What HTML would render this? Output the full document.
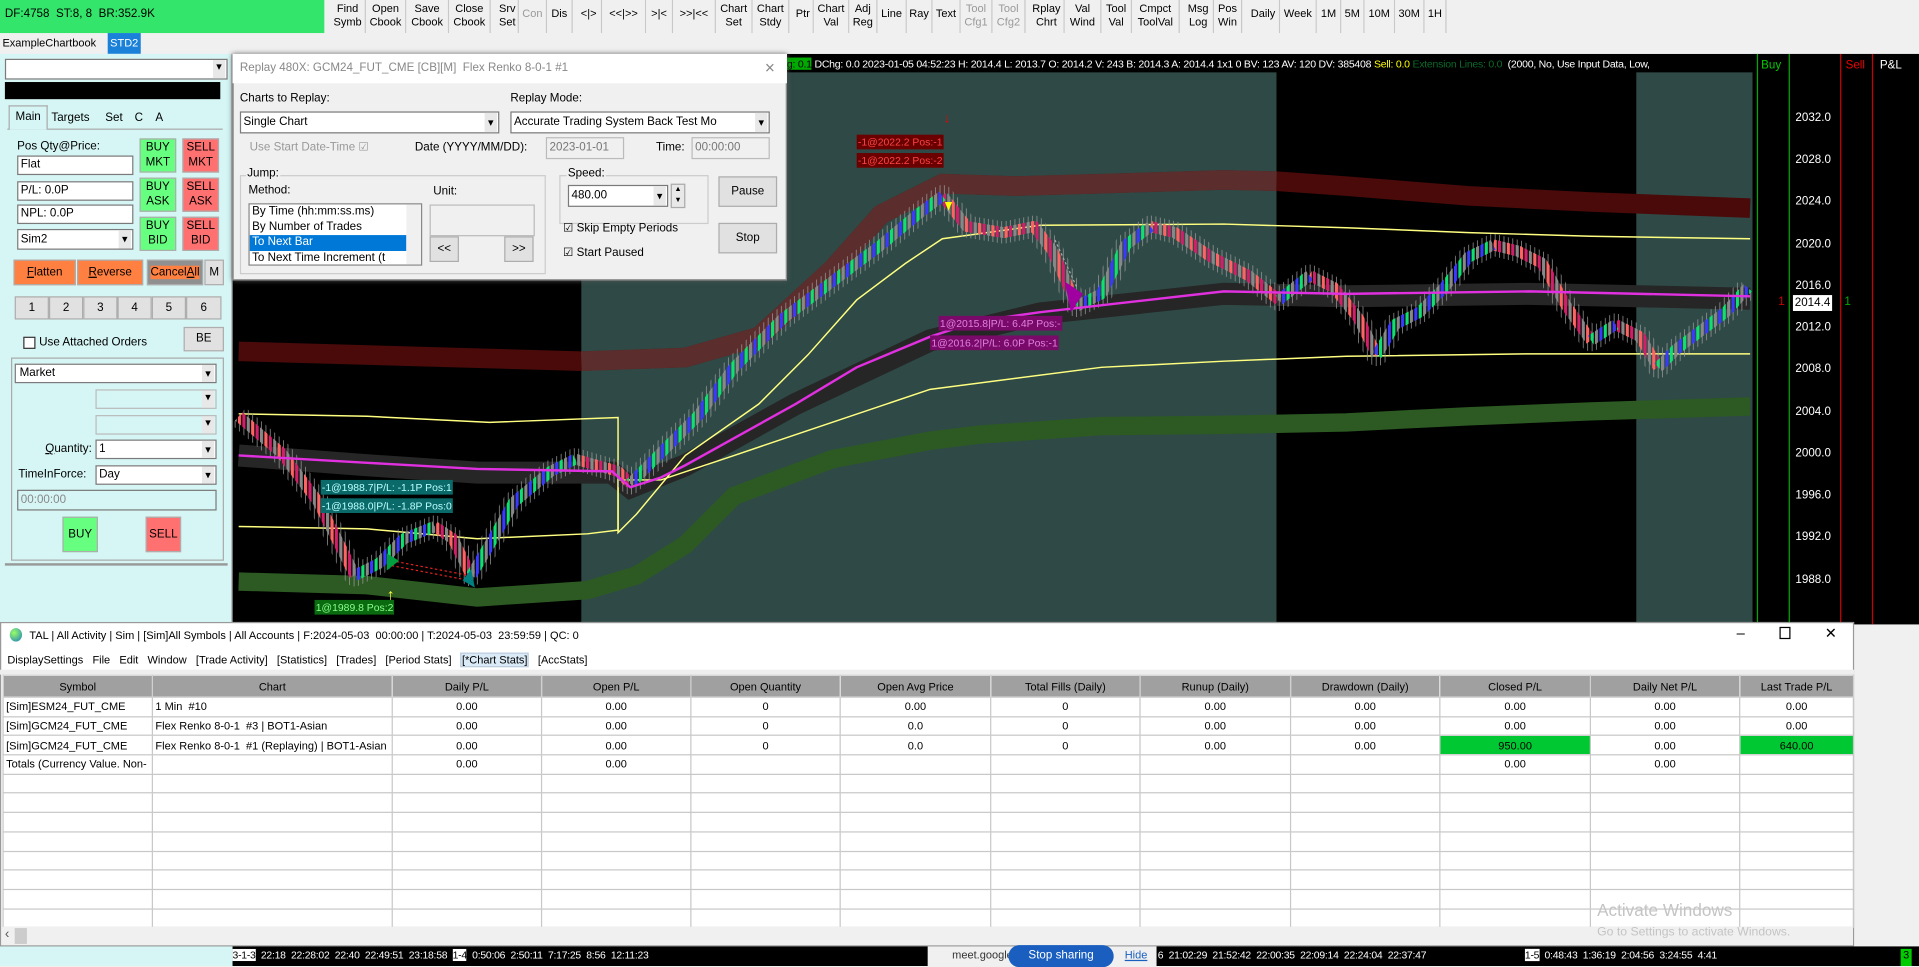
<!DOCTYPE html>
<html><head><meta charset="utf-8">
<style>
*{box-sizing:border-box;margin:0;padding:0}
html,body{width:1919px;height:966px;overflow:hidden;background:#f0f0f0}
#w{position:absolute;left:0;top:0;width:1568px;height:789px;transform:scale(1.22385,1.22433);transform-origin:0 0;font-family:"Liberation Sans Narrow","Liberation Sans",sans-serif;font-size:9.5px;color:#000}
.a{position:absolute}
.tb{position:absolute;top:0;height:27px;border-right:1px solid #c8c8c8;text-align:center;line-height:11px;padding-top:2px;font-size:9px;background:#f0f0f0;overflow:hidden;white-space:nowrap}
.tb.s{line-height:23px;padding-top:0}
.g{color:#999}
.btn{position:absolute;background:#e1e1e1;border:1px solid #adadad;text-align:center}
.inp{position:absolute;background:#fff;border:1px solid #7a7a7a;overflow:hidden;white-space:nowrap}
.dd:after{content:"▾";position:absolute;right:1px;top:0;font-size:9px;width:10px;height:100%;background:#e8e8e8;text-align:center}
table{border-collapse:collapse;table-layout:fixed}
td,th{border:1px solid #c8c8c8;height:15.7px;font-weight:normal;font-size:9px;white-space:nowrap;overflow:hidden;padding:0 2px;text-align:center}
th{background:#a0a0a0;height:18px;border-color:#d0d0d0}
td.l{text-align:left}
.lab{position:absolute;font-size:8.5px;padding:0 1px;line-height:12px;white-space:nowrap}
.px{position:absolute;left:1467px;color:#fff;font-size:9.5px}
</style></head><body><div id="w">

<div class="a" style="left:0;top:0;width:265px;height:28px;background:#33e66b;font-size:9.5px;line-height:24px;padding-left:4px">DF:4758&nbsp; ST:8, 8&nbsp; BR:352.9K</div>
<div class="tb" style="left:270px;width:29px">Find<br>Symb</div>
<div class="tb" style="left:299px;width:33px">Open<br>Cbook</div>
<div class="tb" style="left:332px;width:35px">Save<br>Cbook</div>
<div class="tb" style="left:367px;width:34px">Close<br>Cbook</div>
<div class="tb" style="left:406px;width:18px">Srv<br>Set</div>
<div class="tb s g" style="left:424px;width:23px">Con</div>
<div class="tb s" style="left:447px;width:21px">Dis</div>
<div class="tb s" style="left:471px;width:21px">&lt;|&gt;</div>
<div class="tb s" style="left:492px;width:36px">&lt;&lt;|&gt;&gt;</div>
<div class="tb s" style="left:528px;width:22px">&gt;|&lt;</div>
<div class="tb s" style="left:550px;width:35px">&gt;&gt;|&lt;&lt;</div>
<div class="tb" style="left:585px;width:30px">Chart<br>Set</div>
<div class="tb" style="left:615px;width:30px">Chart<br>Stdy</div>
<div class="tb s" style="left:648px;width:17px">Ptr</div>
<div class="tb" style="left:665px;width:29px">Chart<br>Val</div>
<div class="tb" style="left:694px;width:23px">Adj<br>Reg</div>
<div class="tb s" style="left:717px;width:24px">Line</div>
<div class="tb s" style="left:741px;width:21px">Ray</div>
<div class="tb s" style="left:762px;width:23px">Text</div>
<div class="tb g" style="left:785px;width:26px">Tool<br>Cfg1</div>
<div class="tb g" style="left:811px;width:27px">Tool<br>Cfg2</div>
<div class="tb" style="left:841px;width:29px">Rplay<br>Chrt</div>
<div class="tb" style="left:870px;width:30px">Val<br>Wind</div>
<div class="tb" style="left:900px;width:25px">Tool<br>Val</div>
<div class="tb" style="left:925px;width:39px">Cmpct<br>ToolVal</div>
<div class="tb" style="left:967px;width:25px">Msg<br>Log</div>
<div class="tb" style="left:992px;width:23px">Pos<br>Win</div>
<div class="tb s" style="left:1019px;width:27px">Daily</div>
<div class="tb s" style="left:1046px;width:30px">Week</div>
<div class="tb s" style="left:1076px;width:20px">1M</div>
<div class="tb s" style="left:1096px;width:19px">5M</div>
<div class="tb s" style="left:1115px;width:25px">10M</div>
<div class="tb s" style="left:1140px;width:24px">30M</div>
<div class="tb s" style="left:1164px;width:18px">1H</div>

<div class="a" style="left:0;top:27px;width:1568px;height:17px;background:#f0f0f0"></div>
<div class="a" style="left:2px;top:28px;height:15px;line-height:15px;font-size:9px">ExampleChartbook</div>
<div class="a" style="left:88px;top:27px;width:27px;height:17px;background:#1a80d8;color:#fff;line-height:17px;text-align:center;font-size:9px">STD2</div>

<svg class="a" style="left:190px;top:44px" width="1378" height="466" viewBox="190 44 1378 466">
<defs>
<pattern id="pu" patternUnits="userSpaceOnUse" width="10.8" height="20"><rect x="0" y="0" width="2.6" height="20" fill="#3a3aff"/><rect x="3.6" y="0" width="2.6" height="20" fill="#10e070"/><rect x="7.2" y="0" width="2.6" height="20" fill="#888"/></pattern>
<pattern id="pd" patternUnits="userSpaceOnUse" width="10.8" height="20"><rect x="0" y="0" width="2.6" height="20" fill="#ff6464"/><rect x="3.6" y="0" width="2.6" height="20" fill="#d0206a"/><rect x="7.2" y="0" width="2.6" height="20" fill="#888"/></pattern>
<pattern id="pw" patternUnits="userSpaceOnUse" width="3.6" height="20"><rect x="1" y="0" width="0.6" height="20" fill="#999"/></pattern>
</defs>
<rect x="190" y="44" width="1378" height="466" fill="#000"/>
<rect x="475" y="59" width="568" height="451" fill="#2f4a46"/>
<rect x="1337" y="59" width="95" height="451" fill="#2f4a46"/>
<polyline fill="none" stroke="#4a0a0a" stroke-width="16" points="195,287 475,295 560,292 620,275 680,220 720,175 770,150 830,152 900,150 1000,147 1043,148 1100,152 1200,160 1300,165 1430,170"/>
<polyline fill="none" stroke="#6a4a48" stroke-width="16" stroke-opacity=".55" points="475,295 560,292 620,275 680,220 720,175 770,150 830,152 900,150 1000,147 1043,148"/>
<polyline fill="none" stroke="#2c5a22" stroke-width="15" points="195,475 300,478 390,488 480,482 520,470 560,445 600,405 680,375 760,360 800,355 900,348 1000,347 1100,345 1200,340 1300,336 1430,332"/>
<polyline fill="none" stroke="#262626" stroke-width="18" points="195,372 300,380 390,386 500,386 515,398 560,380 650,330 760,278 850,256 1000,240 1100,242 1250,240 1430,244"/>
<polyline fill="none" stroke="#ffff80" stroke-width="1.2" points="195,338 300,340 400,345 505,341 505,435 520,420 560,372 620,330 660,290 700,245 740,215 770,195 850,184 1000,183 1100,186 1200,190 1300,193 1430,195"/>
<polyline fill="none" stroke="#ffff80" stroke-width="1.2" points="195,430 300,432 390,440 480,436 505,433 505,392 540,392 600,372 650,355 760,318 900,300 1000,295 1100,291 1250,289 1430,289"/>
<g fill="none" stroke-linejoin="round">
<polyline stroke="url(#pw)" stroke-width="18" points="195,340 230,370 260,410 290,470 310,460 330,440 355,430 370,440 385,470 400,445 420,410 450,385 470,375 505,385 515,395 540,370 570,340 600,300 640,260 680,230 720,200 750,175 770,160 790,185 820,190 845,185 860,205 880,250 900,240 920,200 940,185 960,190 990,210 1020,225 1045,245 1070,225 1090,235 1110,260 1125,290 1140,265 1160,255 1180,235 1200,210 1220,200 1240,205 1260,215 1280,250 1300,278 1320,265 1340,275 1355,300 1370,285 1390,270 1410,255 1428,235"/>
<g stroke="url(#pd)" stroke-width="9">
<polyline points="195,340 230,370 260,410 290,470"/>
<polyline points="355,430 370,440 385,470"/>
<polyline points="470,375 505,385 515,395"/>
<polyline points="770,160 790,185 820,190 845,185 860,205 880,250"/>
<polyline points="940,185 960,190 990,210 1020,225 1045,245"/>
<polyline points="1070,225 1090,235 1110,260 1125,290"/>
<polyline points="1220,200 1240,205 1260,215 1280,250 1300,278"/>
<polyline points="1320,265 1340,275 1355,300"/>
</g>
<g stroke="url(#pu)" stroke-width="9">
<polyline points="290,470 310,460 330,440 355,430"/>
<polyline points="385,470 400,445 420,410 450,385 470,375"/>
<polyline points="515,395 540,370 570,340 600,300 640,260 680,230 720,200 750,175 770,160"/>
<polyline points="880,250 900,240 920,200 940,185"/>
<polyline points="1045,245 1070,225"/>
<polyline points="1125,290 1140,265 1160,255 1180,235 1200,210 1220,200"/>
<polyline points="1300,278 1320,265"/>
<polyline points="1355,300 1370,285 1390,270 1410,255 1428,235"/>
</g></g>
<polyline fill="none" stroke="#e030e0" stroke-width="2" points="195,372 300,378 390,383 500,385 515,398 540,390 560,380 650,330 700,300 760,275 800,262 850,255 1000,238 1100,240 1250,238 1430,242"/>
<line x1="862" y1="196" x2="880" y2="235" stroke="#aaa" stroke-dasharray="2,2"/>
<line x1="320" y1="458" x2="383" y2="470" stroke="#e02020" stroke-dasharray="2,2"/>
<line x1="320" y1="462" x2="383" y2="474" stroke="#e02020" stroke-dasharray="2,2"/>
<polygon points="870,230 885,240 875,255" fill="#a000a0"/>
<polygon points="385,465 378,474 388,480" fill="#008080"/>
<polygon points="316,452 326,458 316,466" fill="#00a040"/>
<polygon points="772,165 778,165 775,172" fill="#ffff00"/>
<text x="771" y="100" fill="#e00" font-size="11">↓</text>
<text x="316" y="490" fill="#ffff40" font-size="13">↑</text>
<rect x="1432" y="44" width="136" height="466" fill="#000"/>
<line x1="1436" y1="44" x2="1436" y2="510" stroke="#0a0"/>
<line x1="1462" y1="44" x2="1462" y2="510" stroke="#0a0"/>
<line x1="1504" y1="44" x2="1504" y2="510" stroke="#c00"/>
<line x1="1530" y1="44" x2="1530" y2="510" stroke="#c00"/>
</svg>
<div class="a" style="left:643px;top:45px;width:789px;height:14px;background:#000;color:#fff;font-size:8.6px;line-height:14px;white-space:nowrap;overflow:hidden;letter-spacing:-0.2px"><span style="background:#0a0;color:#000">g: 0.1</span> DChg: 0.0 2023-01-05 04:52:23 H: 2014.4 L: 2013.7 O: 2014.2 V: 243 B: 2014.3 A: 2014.4 1x1 0 BV: 123 AV: 120 DV: 385408 <span style="color:#ff0">Sell: 0.0</span> <span style="color:#0a6a2a">Extension Lines: 0.0</span> &nbsp;(2000, No, Use Input Data, Low,</div>
<div class="a" style="left:1439px;top:48px;color:#0c0;font-size:9.5px">Buy</div>
<div class="a" style="left:1508px;top:48px;color:#e00;font-size:9.5px">Sell</div>
<div class="a" style="left:1536px;top:48px;color:#fff;font-size:9.5px">P&amp;L</div>
<div class="px" style="top:91px">2032.0</div><div class="px" style="top:125px">2028.0</div><div class="px" style="top:159px">2024.0</div><div class="px" style="top:194px">2020.0</div><div class="px" style="top:228px">2016.0</div><div class="px" style="top:262px">2012.0</div><div class="px" style="top:296px">2008.0</div><div class="px" style="top:331px">2004.0</div><div class="px" style="top:365px">2000.0</div><div class="px" style="top:399px">1996.0</div><div class="px" style="top:433px">1992.0</div><div class="px" style="top:468px">1988.0</div>
<div class="a" style="left:1465px;top:241px;width:32px;height:13px;background:#fff;color:#000;font-size:9.5px;line-height:13px;text-align:center">2014.4</div>
<div class="a" style="left:1453px;top:241px;color:#c00;font-size:9.5px">1</div>
<div class="a" style="left:1507px;top:241px;color:#0a0;font-size:9.5px">1</div>
<div class="lab" style="left:700px;top:110px;background:#6a0000;color:#f44">-1@2022.2 Pos:-1</div>
<div class="lab" style="left:700px;top:125px;background:#6a0000;color:#f44">-1@2022.2 Pos:-2</div>
<div class="lab" style="left:767px;top:258px;background:#7a0a6a;color:#e080e0">1@2015.8|P/L: 6.4P Pos:-</div>
<div class="lab" style="left:760px;top:274px;background:#7a0a6a;color:#e080e0">1@2016.2|P/L: 6.0P Pos:-1</div>
<div class="lab" style="left:262px;top:392px;background:#0a6a6a;color:#bff">-1@1988.7|P/L: -1.1P Pos:1</div>
<div class="lab" style="left:262px;top:407px;background:#0a6a6a;color:#bff">-1@1988.0|P/L: -1.8P Pos:0</div>
<div class="lab" style="left:257px;top:490px;background:#0a6a10;color:#8f8">1@1989.8 Pos:2</div>

<div class="a" style="left:0;top:44px;width:190px;height:466px;background:#d6f6f6;border-right:1px solid #aaa"></div>
<div class="inp dd" style="left:4px;top:48px;width:182px;height:17px"></div>
<div class="a" style="left:4px;top:67px;width:176px;height:14px;background:#000"></div>
<div class="a" style="left:6px;top:86px;width:176px;height:20px;border-bottom:1px solid #aaa"></div>
<div class="a" style="left:7px;top:86px;width:32px;height:20px;background:#d6f6f6;border:1px solid #aaa;border-bottom:none;line-height:18px;text-align:center">Main</div>
<div class="a" style="left:42px;top:89px;line-height:15px">Targets</div>
<div class="a" style="left:86px;top:89px;line-height:15px">Set</div>
<div class="a" style="left:110px;top:89px;line-height:15px">C</div>
<div class="a" style="left:127px;top:89px;line-height:15px">A</div>
<div class="a" style="left:14px;top:114px">Pos Qty@Price:</div>
<div class="inp" style="left:14px;top:127px;width:95px;height:16px;padding-left:2px;line-height:14px">Flat</div>
<div class="inp" style="left:14px;top:148px;width:95px;height:16px;padding-left:2px;line-height:14px">P/L: 0.0P</div>
<div class="inp" style="left:14px;top:167px;width:95px;height:16px;padding-left:2px;line-height:14px">NPL: 0.0P</div>
<div class="inp dd" style="left:14px;top:187px;width:95px;height:17px;padding-left:2px;line-height:15px">Sim2</div>
<div class="btn" style="left:114px;top:113px;width:30px;height:28px;background:#66ff80;line-height:12px;padding-top:1px">BUY<br>MKT</div>
<div class="btn" style="left:149px;top:113px;width:30px;height:28px;background:#ff7070;line-height:12px;padding-top:1px">SELL<br>MKT</div>
<div class="btn" style="left:114px;top:145px;width:30px;height:28px;background:#66ff80;line-height:12px;padding-top:1px">BUY<br>ASK</div>
<div class="btn" style="left:149px;top:145px;width:30px;height:28px;background:#ff7070;line-height:12px;padding-top:1px">SELL<br>ASK</div>
<div class="btn" style="left:114px;top:177px;width:30px;height:28px;background:#66ff80;line-height:12px;padding-top:1px">BUY<br>BID</div>
<div class="btn" style="left:149px;top:177px;width:30px;height:28px;background:#ff7070;line-height:12px;padding-top:1px">SELL<br>BID</div>
<div class="btn" style="left:11px;top:212px;width:51px;height:21px;background:#ff8040;line-height:19px"><u>F</u>latten</div>
<div class="btn" style="left:63px;top:212px;width:54px;height:21px;background:#ff8040;line-height:19px"><u>R</u>everse</div>
<div class="btn" style="left:120px;top:212px;width:46px;height:21px;background:#909090;line-height:19px;white-space:nowrap"><span style="background:#ff8040">Cancel<u>A</u>ll</span></div>
<div class="btn" style="left:167px;top:212px;width:16px;height:21px;line-height:19px">M</div>
<div class="btn" style="left:12px;top:242px;width:28px;height:19px;line-height:17px">1</div>
<div class="btn" style="left:40px;top:242px;width:28px;height:19px;line-height:17px">2</div>
<div class="btn" style="left:68px;top:242px;width:28px;height:19px;line-height:17px">3</div>
<div class="btn" style="left:96px;top:242px;width:28px;height:19px;line-height:17px">4</div>
<div class="btn" style="left:124px;top:242px;width:28px;height:19px;line-height:17px">5</div>
<div class="btn" style="left:152px;top:242px;width:29px;height:19px;line-height:17px">6</div>
<div class="a" style="left:19px;top:275px;width:10px;height:10px;background:#fff;border:1px solid #333"></div>
<div class="a" style="left:32px;top:274px">Use Attached Orders</div>
<div class="btn" style="left:150px;top:267px;width:33px;height:20px;line-height:18px">BE</div>
<div class="a" style="left:9px;top:292px;width:174px;height:166px;border:1px solid #aaa"></div>
<div class="inp dd" style="left:12px;top:297px;width:165px;height:16px;padding-left:3px;line-height:14px">Market</div>
<div class="inp dd" style="left:78px;top:318px;width:99px;height:16px;background:#d6f6f6;border-color:#bbb"></div>
<div class="inp dd" style="left:78px;top:339px;width:99px;height:16px;background:#d6f6f6;border-color:#bbb"></div>
<div class="a" style="left:37px;top:361px"><u>Q</u>uantity:</div>
<div class="inp dd" style="left:78px;top:359px;width:99px;height:16px;padding-left:2px;line-height:14px">1</div>
<div class="a" style="left:15px;top:382px">TimeInForce:</div>
<div class="inp dd" style="left:78px;top:380px;width:99px;height:16px;padding-left:2px;line-height:14px">Day</div>
<div class="inp" style="left:14px;top:400px;width:163px;height:17px;background:#d6f6f6;color:#888;padding-left:2px;line-height:15px">00:00:00</div>
<div class="btn" style="left:51px;top:422px;width:29px;height:29px;background:#66ff80;line-height:27px">BUY</div>
<div class="btn" style="left:119px;top:422px;width:29px;height:29px;background:#ff7070;line-height:27px">SELL</div>
<div class="a" style="left:4px;top:460px;width:182px;height:2px;background:#999"></div>

<div class="a" style="left:190px;top:44px;width:453px;height:185px;background:#f0f0f0;border:1px solid #888;box-shadow:0 0 4px #555"></div>
<div class="a" style="left:190px;top:44px;width:453px;height:24px;background:#fff"></div>
<div class="a" style="left:196px;top:50px;color:#888;font-size:9.5px">Replay 480X: GCM24_FUT_CME [CB][M]&nbsp; Flex Renko 8-0-1 #1</div>
<div class="a" style="left:625px;top:47px;color:#888;font-size:14px">×</div>
<div class="a" style="left:196px;top:75px">Charts to Replay:</div>
<div class="inp dd" style="left:196px;top:91px;width:212px;height:18px;padding-left:2px;line-height:16px">Single Chart</div>
<div class="a" style="left:417px;top:75px">Replay Mode:</div>
<div class="inp dd" style="left:417px;top:91px;width:212px;height:18px;padding-left:2px;line-height:16px">Accurate Trading System Back Test Mo</div>
<div class="a" style="left:204px;top:115px;color:#999">Use Start Date-Time ☑</div>
<div class="a" style="left:339px;top:115px">Date (YYYY/MM/DD):</div>
<div class="inp" style="left:446px;top:112px;width:64px;height:18px;background:#f0f0f0;border-color:#bbb;color:#777;padding-left:2px;line-height:16px">2023-01-01</div>
<div class="a" style="left:536px;top:115px">Time:</div>
<div class="inp" style="left:565px;top:112px;width:64px;height:18px;background:#f0f0f0;border-color:#bbb;color:#777;padding-left:2px;line-height:16px">00:00:00</div>
<div class="a" style="left:196px;top:143px;width:250px;height:81px;border:1px solid #ccc"></div>
<div class="a" style="left:201px;top:136px;background:#f0f0f0;padding:0 1px">Jump:</div>
<div class="a" style="left:203px;top:150px">Method:</div>
<div class="a" style="left:354px;top:151px">Unit:</div>
<div class="a" style="left:203px;top:166px;width:142px;height:51px;background:#fff;border:1px solid #888;overflow:hidden;line-height:12.5px;padding-left:2px;white-space:nowrap">By Time (hh:mm:ss.ms)<br>By Number of Trades<div style="background:#0078d7;color:#fff;margin-left:-2px;padding-left:2px;width:128px">To Next Bar</div>To Next Time Increment (t</div>
<div class="a" style="left:332px;top:167px;width:12px;height:49px;background:#f0f0f0"></div>
<div class="inp" style="left:351px;top:167px;width:86px;height:26px;background:#f0f0f0;border-color:#bbb"></div>
<div class="btn" style="left:351px;top:193px;width:24px;height:21px;line-height:19px">&lt;&lt;</div>
<div class="btn" style="left:412px;top:193px;width:24px;height:21px;line-height:19px">&gt;&gt;</div>
<div class="a" style="left:457px;top:143px;width:122px;height:40px;border:1px solid #ccc"></div>
<div class="a" style="left:463px;top:136px;background:#f0f0f0;padding:0 1px">Speed:</div>
<div class="inp dd" style="left:464px;top:151px;width:82px;height:18px;padding-left:2px;line-height:16px">480.00</div>
<div class="a" style="left:548px;top:150px;width:12px;height:20px;background:#e8e8e8;border:1px solid #aaa;font-size:6px;text-align:center;line-height:9px">▲<br>▼</div>
<div class="btn" style="left:587px;top:144px;width:48px;height:25px;line-height:23px">Pause</div>
<div class="btn" style="left:587px;top:182px;width:48px;height:25px;line-height:23px">Stop</div>
<div class="a" style="left:460px;top:181px">☑ Skip Empty Periods</div>
<div class="a" style="left:460px;top:201px">☑ Start Paused</div>

<div class="a" style="left:0;top:508px;width:1515px;height:265px;background:#fff;border:1px solid #999"></div>
<div class="a" style="left:8px;top:513px;width:10px;height:11px;border-radius:50%;background:radial-gradient(circle at 35% 35%,#9f6,#1a7ac0)"></div>
<div class="a" style="left:24px;top:514px;font-size:9px">TAL | All Activity | Sim | [Sim]All Symbols | All Accounts | F:2024-05-03&nbsp; 00:00:00 | T:2024-05-03&nbsp; 23:59:59 | QC: 0</div>
<div class="a" style="left:1419px;top:510px;font-size:12px">–</div>
<div class="a" style="left:1454px;top:512px;width:9px;height:10px;border:1px solid #000"></div>
<div class="a" style="left:1491px;top:510px;font-size:12px">✕</div>
<div class="a" style="left:6px;top:534px;white-space:nowrap;font-size:9px">DisplaySettings&nbsp;&nbsp; File&nbsp;&nbsp; Edit&nbsp;&nbsp; Window&nbsp;&nbsp; [Trade Activity]&nbsp;&nbsp; [Statistics]&nbsp;&nbsp; [Trades]&nbsp;&nbsp; [Period Stats]&nbsp;&nbsp; <span style="background:#dbeaf7;border:1px solid #bcd">[*Chart Stats]</span>&nbsp;&nbsp; [AccStats]</div>
<div class="a" style="left:0;top:547px;width:1515px;height:4px;background:#eee"></div>
<table class="a" style="left:2px;top:551px;width:1512px">
<colgroup><col style="width:122px"><col style="width:196px"><col style="width:122px"><col style="width:122px"><col style="width:122px"><col style="width:123px"><col style="width:122px"><col style="width:123px"><col style="width:122px"><col style="width:123px"><col style="width:122px"><col style="width:93px"></colgroup>
<tr><th>Symbol</th><th>Chart</th><th>Daily P/L</th><th>Open P/L</th><th>Open Quantity</th><th>Open Avg Price</th><th>Total Fills (Daily)</th><th>Runup (Daily)</th><th>Drawdown (Daily)</th><th>Closed P/L</th><th>Daily Net P/L</th><th>Last Trade P/L</th></tr>
<tr><td class="l">[Sim]ESM24_FUT_CME</td><td class="l">1 Min&nbsp; #10</td><td>0.00</td><td>0.00</td><td>0</td><td>0.00</td><td>0</td><td>0.00</td><td>0.00</td><td>0.00</td><td>0.00</td><td>0.00</td></tr>
<tr><td class="l">[Sim]GCM24_FUT_CME</td><td class="l">Flex Renko 8-0-1&nbsp; #3 | BOT1-Asian</td><td>0.00</td><td>0.00</td><td>0</td><td>0.0</td><td>0</td><td>0.00</td><td>0.00</td><td>0.00</td><td>0.00</td><td>0.00</td></tr>
<tr><td class="l">[Sim]GCM24_FUT_CME</td><td class="l">Flex Renko 8-0-1&nbsp; #1 (Replaying) | BOT1-Asian</td><td>0.00</td><td>0.00</td><td>0</td><td>0.0</td><td>0</td><td>0.00</td><td>0.00</td><td style="background:#00c832">950.00</td><td>0.00</td><td style="background:#00c832">640.00</td></tr>
<tr><td class="l">Totals (Currency Value. Non-</td><td></td><td>0.00</td><td>0.00</td><td></td><td></td><td></td><td></td><td></td><td>0.00</td><td>0.00</td><td></td></tr>
<tr><td></td><td></td><td></td><td></td><td></td><td></td><td></td><td></td><td></td><td></td><td></td><td></td></tr>
<tr><td></td><td></td><td></td><td></td><td></td><td></td><td></td><td></td><td></td><td></td><td></td><td></td></tr>
<tr><td></td><td></td><td></td><td></td><td></td><td></td><td></td><td></td><td></td><td></td><td></td><td></td></tr>
<tr><td></td><td></td><td></td><td></td><td></td><td></td><td></td><td></td><td></td><td></td><td></td><td></td></tr>
<tr><td></td><td></td><td></td><td></td><td></td><td></td><td></td><td></td><td></td><td></td><td></td><td></td></tr>
<tr><td></td><td></td><td></td><td></td><td></td><td></td><td></td><td></td><td></td><td></td><td></td><td></td></tr>
<tr><td></td><td></td><td></td><td></td><td></td><td></td><td></td><td></td><td></td><td></td><td></td><td></td></tr>
<tr><td></td><td></td><td></td><td></td><td></td><td></td><td></td><td></td><td></td><td></td><td></td><td></td></tr>
</table>
<div class="a" style="left:1px;top:757px;width:1513px;height:15px;background:#f0f0f0"></div>
<div class="a" style="left:4px;top:757px;font-size:11px;color:#555">‹</div>
<div class="a" style="left:12px;top:758px;width:10px;height:13px;background:#ccc"></div>
<div class="a" style="left:1305px;top:735px;color:#c4c4c4;font-size:14px">Activate Windows</div>
<div class="a" style="left:1305px;top:756px;color:#c4c4c4;font-size:10px">Go to Settings to activate Windows.</div>

<div class="a" style="left:0;top:773px;width:1568px;height:16px;background:#000"></div>
<div class="a" style="left:0;top:773px;width:190px;height:16px;background:#d6f6f6"></div>
<div class="a" style="left:190px;top:775px;width:566px;overflow:hidden;color:#fff;font-size:8.5px;white-space:nowrap;letter-spacing:-0.2px"><span style="background:#fff;color:#000">3-1-3</span>&nbsp; 22:18&nbsp; 22:28:02&nbsp; 22:40&nbsp; 22:49:51&nbsp; 23:18:58&nbsp; <span style="background:#fff;color:#000">1-4</span>&nbsp; 0:50:06&nbsp; 2:50:11&nbsp; 7:17:25&nbsp; 8:56&nbsp; 12:11:23</div>
<div class="a" style="left:758px;top:773px;width:187px;height:16px;background:#f0f0f0"></div>
<div class="a" style="left:778px;top:775px;width:46px;overflow:hidden;color:#333;font-size:9px;white-space:nowrap">meet.google.com is sharing your screen.</div>
<div class="a" style="left:824px;top:772px;width:86px;height:18px;border-radius:9px;background:#1a5fc0;color:#fff;text-align:center;line-height:18px;font-size:9.5px">Stop sharing</div>
<div class="a" style="left:919px;top:775px;color:#1a5fc0;text-decoration:underline;font-size:9px">Hide</div>
<div class="a" style="left:946px;top:775px;width:290px;overflow:hidden;color:#fff;font-size:8.5px;white-space:nowrap;letter-spacing:-0.2px">6&nbsp; 21:02:29&nbsp; 21:52:42&nbsp; 22:00:35&nbsp; 22:09:14&nbsp; 22:24:04&nbsp; 22:37:47</div>
<div class="a" style="left:1246px;top:775px;color:#fff;font-size:8.5px;white-space:nowrap;letter-spacing:-0.2px"><span style="background:#fff;color:#000">1-5</span>&nbsp; 0:48:43&nbsp; 1:36:19&nbsp; 2:04:56&nbsp; 3:24:55&nbsp; 4:41</div>
<div class="a" style="left:1553px;top:775px;width:9px;height:14px;background:#0c0;color:#000;font-size:9px;text-align:center">3</div>

</div>
</body></html>
